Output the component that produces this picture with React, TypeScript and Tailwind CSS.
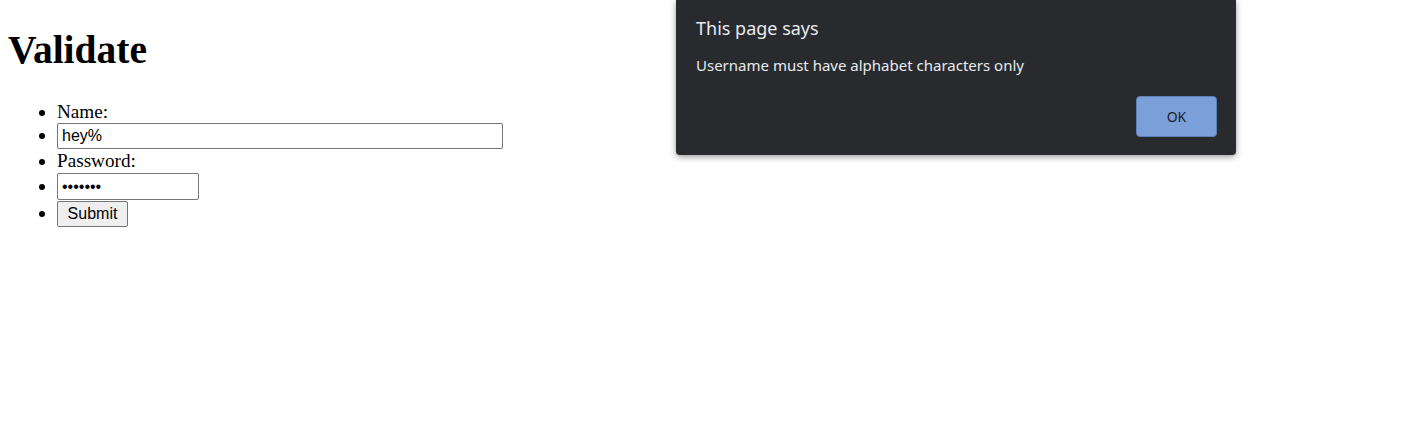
import React from "react";

const serif = "font-['Liberation_Serif','Times_New_Roman',serif]";
const sans = "font-['Liberation_Sans',Arial,sans-serif]";

function AlertDialog() {
  return (
    <div className="absolute left-[676px] top-0 w-[560px] h-[155px] bg-[#292a2d] rounded-b-[4px] shadow-[0_2px_6px_rgba(0,0,0,0.4)] flex flex-col pl-[20px] pr-[19px] font-['Noto_Sans','Open_Sans',sans-serif] text-[#e8eaed]">
      <div className="pt-[16px] text-[18px] leading-[24px]">This page says</div>
      <div className="mt-[15px] text-[15px] leading-[20px]">
        Username must have alphabet characters only
      </div>
      <button className="mt-auto mb-[18px] self-end w-[81px] h-[41px] rounded-[4px] bg-[#7b9fd9] border border-[#5f7fb8] text-[14px] text-[#202124]">
        OK
      </button>
    </div>
  );
}

export default function App() {
  return (
    <div className={`relative min-h-[447px] bg-white text-black ${serif}`}>
      <div className="pl-[8px] pr-[10px] pt-[28px]">
        <h1 className="text-[39.5px] leading-[44px] font-bold">Validate</h1>
        <ul className="mt-[29px] pl-[49px] list-disc text-[19.2px] leading-[22px]">
          <li className="h-[22px]">Name:</li>
          <li className="h-[27px]">
            <input
              type="text"
              readOnly
              value="hey%"
              className={`w-[446px] h-[26px] pl-[4px] pr-[3px] border border-[#767676] rounded-[2px] text-[16px] align-baseline outline-none ${sans}`}
            />
          </li>
          <li className="h-[23px]">Password:</li>
          <li className="h-[28px]">
            <input
              type="password"
              readOnly
              value="1234567"
              className={`w-[142px] h-[27px] pl-[4px] pr-[3px] border border-[#767676] rounded-[2px] text-[16px] align-baseline outline-none ${sans}`}
            />
          </li>
          <li>
            <button
              className={`w-[71px] h-[26px] bg-[#efefef] border border-[#767676] rounded-[2px] text-[16px] ${sans}`}
            >
              Submit
            </button>
          </li>
        </ul>
      </div>
      <AlertDialog />
    </div>
  );
}
